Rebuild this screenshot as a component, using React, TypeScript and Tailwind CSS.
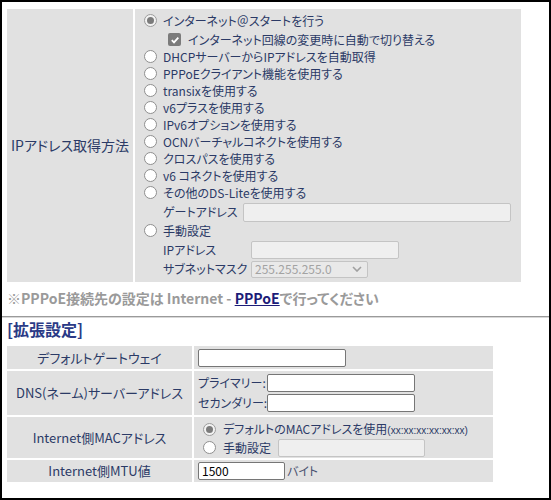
import React from 'react';

const FONT = "font-['Noto_Sans_CJK_JP','Noto_Sans',sans-serif] [font-feature-settings:'palt']";

function Radio({ checked = false }: { checked?: boolean }) {
  if (checked) {
    return (
      <span className="inline-flex w-[13px] h-[13px] rounded-full border border-[#9c9c9c] bg-[#f2f2f2] items-center justify-center shrink-0">
        <span className="w-[7px] h-[7px] rounded-full bg-[#7b7b7b]" />
      </span>
    );
  }
  return <span className="inline-block w-[13px] h-[13px] rounded-full border border-[#8f8f8f] bg-white shrink-0" />;
}

function Checkbox() {
  return (
    <span className="inline-flex w-[13px] h-[13px] rounded-[2px] bg-[#7b7b7b] items-center justify-center shrink-0">
      <svg width="10" height="10" viewBox="0 0 10 10">
        <polyline points="1.8,5.2 4,7.4 8.3,2.6" fill="none" stroke="white" strokeWidth="1.8" />
      </svg>
    </span>
  );
}

function OptRow({ children, checked = false }: { children: React.ReactNode; checked?: boolean }) {
  return (
    <div className="flex items-center h-[17px] gap-[6px]">
      <Radio checked={checked} />
      <span className="leading-[17px] whitespace-nowrap">{children}</span>
    </div>
  );
}

function DisabledInput({ w, h = 18 }: { w: string; h?: number }) {
  return (
    <div
      className={`${w} bg-[#efefef] border border-[#c4c4c4] rounded-[2px] shrink-0`}
      style={{ height: h }}
    />
  );
}

function TextInput({ w, value = '' }: { w: string; value?: string }) {
  return (
    <div className={`${w} h-[18px] bg-white border border-[#767676] rounded-[2px] shrink-0 flex items-center pl-[3px] text-[12px] text-black leading-none`}>
      {value}
    </div>
  );
}

export default function App() {
  return (
    <div className={`w-[551px] h-[500px] border-2 border-black bg-white text-[#2b3a66] ${FONT} overflow-hidden`}>
      {/* top table */}
      <div className="pl-[5px] pt-[7px]">
        <div className="grid grid-cols-[126px_386px] gap-x-[2px] w-[514px]">
          <div className="bg-[#e1e1e1] flex items-center justify-center text-[14px]">IPアドレス取得方法</div>
          <div className="bg-[#e1e1e1] pl-[9px] pt-[3px] pb-[3px] text-[12px] h-[273px]">
            <OptRow checked>インターネット＠スタートを行う</OptRow>
            <div className="flex items-center h-[19px] gap-[7px] pl-[24px] pt-[2px]">
              <Checkbox />
              <span className="leading-[17px] whitespace-nowrap">インターネット回線の変更時に自動で切り替える</span>
            </div>
            <OptRow>DHCPサーバーからIPアドレスを自動取得</OptRow>
            <OptRow>PPPoEクライアント機能を使用する</OptRow>
            <OptRow>transixを使用する</OptRow>
            <OptRow>v6プラスを使用する</OptRow>
            <OptRow>IPv6オプションを使用する</OptRow>
            <OptRow>OCNバーチャルコネクトを使用する</OptRow>
            <OptRow>クロスパスを使用する</OptRow>
            <OptRow>v6 コネクトを使用する</OptRow>
            <OptRow>その他のDS-Liteを使用する</OptRow>
            <div className="flex items-center h-[21px] pl-[19px] gap-[5px] pt-[1px]">
              <span className="whitespace-nowrap">ゲートアドレス</span>
              <DisabledInput w="w-[268px]" h={19} />
            </div>
            <OptRow>手動設定</OptRow>
            <div className="flex items-center h-[20px] pl-[19px] pt-[1px]">
              <span className="w-[88px] whitespace-nowrap">IPアドレス</span>
              <DisabledInput w="w-[148px]" />
            </div>
            <div className="flex items-center h-[19px] pl-[19px] pt-[1px]">
              <span className="w-[88px] whitespace-nowrap">サブネットマスク</span>
              <div className="w-[117px] h-[17px] border border-[#c4c4c4] rounded-[2px] bg-[#e9e9e9] flex items-center justify-between pl-[3px] pr-[5px] text-[12px] text-[#a3a3a3]">
                <span className="leading-none">255.255.255.0</span>
                <svg width="10" height="6" viewBox="0 0 10 6">
                  <polyline points="1,1 5,5 9,1" fill="none" stroke="#a0a0a0" strokeWidth="1.6" />
                </svg>
              </div>
            </div>
          </div>
        </div>
      </div>

      {/* note */}
      <div className="pl-[5px] h-[20px] mt-[6px] flex items-center text-[14px] font-bold text-[#9a9a9a] whitespace-nowrap">
        <span>※PPPoE接続先の設定は Internet -&nbsp;</span>
        <span className="text-[#1c1c78] underline">PPPoE</span>
        <span>で行ってください</span>
      </div>

      {/* hr */}
      <div className="mt-[8px] border-t border-t-[#9a9a9a] border-b border-b-[#d8d8d8]" />

      {/* extended settings title */}
      <div className="pl-[5px] h-[20px] mt-[1px] flex items-center text-[16px] font-bold text-[#2a3a86]">[拡張設定]</div>

      {/* lower table */}
      <div className="pl-[5px] mt-[7px]">
        <div className="grid grid-cols-[185px_299px] gap-[2px] w-[486px] text-[13px]">
          <div className="bg-[#e1e1e1] h-[23px] flex items-center justify-center">デフォルトゲートウェイ</div>
          <div className="bg-[#e1e1e1] h-[23px] flex items-center pl-[4px]">
            <TextInput w="w-[148px]" />
          </div>

          <div className="bg-[#e1e1e1] h-[44px] flex items-center justify-center whitespace-nowrap">DNS(ネーム)サーバーアドレス</div>
          <div className="bg-[#e1e1e1] h-[44px] flex flex-col pl-[4px] pt-[3px] gap-[2px] text-[12px]">
            <div className="flex items-center">
              <span className="w-[69px] whitespace-nowrap">プライマリー:</span>
              <TextInput w="w-[148px]" />
            </div>
            <div className="flex items-center">
              <span className="w-[69px] whitespace-nowrap">セカンダリー:</span>
              <TextInput w="w-[148px]" />
            </div>
          </div>

          <div className="bg-[#e1e1e1] h-[41px] flex items-center justify-center">Internet側MACアドレス</div>
          <div className="bg-[#e1e1e1] h-[41px] flex flex-col pl-[9px] pt-[4px] text-[12px]">
            <div className="flex items-center h-[17px] gap-[7px]">
              <Radio checked />
              <span className="whitespace-nowrap leading-[17px]">
                デフォルトのMACアドレスを使用<span className="text-[10px] [font-feature-settings:normal] font-['Liberation_Sans',sans-serif]">(xx:xx:xx:xx:xx:xx)</span>
              </span>
            </div>
            <div className="flex items-center h-[19px] gap-[7px]">
              <Radio />
              <span className="whitespace-nowrap leading-[17px]">手動設定</span>
              <DisabledInput w="w-[147px]" />
            </div>
          </div>

          <div className="bg-[#e1e1e1] h-[22px] flex items-center justify-center">Internet側MTU値</div>
          <div className="bg-[#e1e1e1] h-[22px] flex items-center pl-[4px] gap-[2px] text-[12px]">
            <TextInput w="w-[87px]" value="1500" />
            <span className="text-[#4a5270]">バイト</span>
          </div>
        </div>
      </div>
    </div>
  );
}
